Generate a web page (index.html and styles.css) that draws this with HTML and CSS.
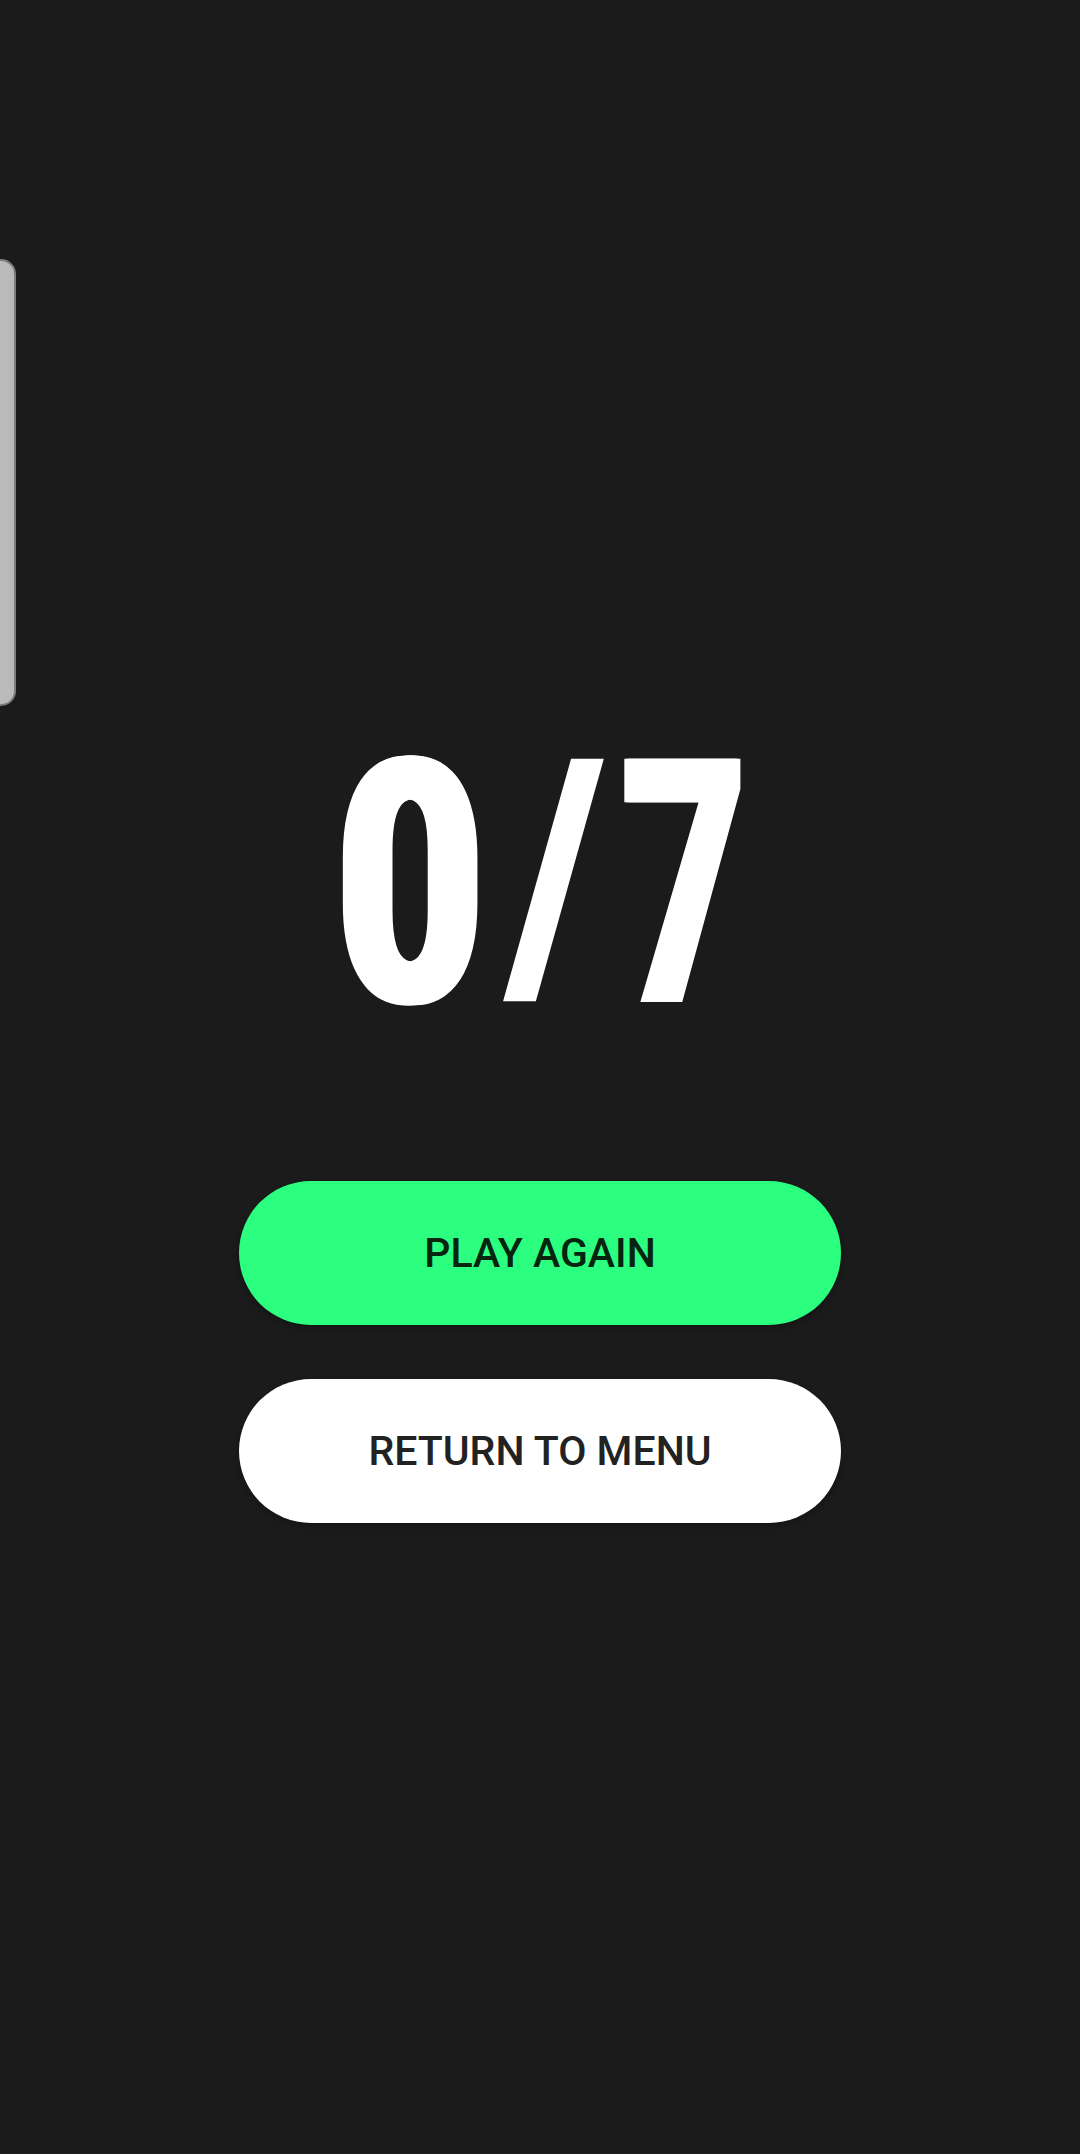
FILE: index.html
```html
<!DOCTYPE html>
<html lang="en">
<head>
<meta charset="utf-8">
<title>Result</title>
<link rel="stylesheet" href="styles.css">
</head>
<body>
<div class="drawer-handle"></div>
<main class="result">
  <div class="score">
    <span class="cell cell-got"><span class="glyph glyph-got">0</span></span>
    <span class="cell cell-sep"><span class="glyph glyph-sep">/</span></span>
    <span class="cell cell-total"><span class="glyph glyph-total">7</span></span>
  </div>
  <div class="actions">
    <button class="btn btn-primary">PLAY AGAIN</button>
    <button class="btn btn-secondary">RETURN TO MENU</button>
  </div>
</main>
</body>
</html>
```
FILE: styles.css
```css
html, body {
  margin: 0;
  padding: 0;
}
body {
  background: #1b1b1b;
  width: 1080px;
  height: 2154px;
  overflow: hidden;
  position: relative;
  font-family: Roboto, "Liberation Sans", sans-serif;
}
.drawer-handle {
  position: absolute;
  left: -20px;
  top: 259px;
  width: 32px;
  height: 443px;
  background: #bababa;
  border: 2px solid #7d7d7d;
  border-radius: 15px;
}
.result {
  display: flex;
  flex-direction: column;
  align-items: center;
  padding-top: 714px;
}
.score {
  height: 342px;
  display: flex;
  align-items: baseline;
  justify-content: center;
  padding-left: 6px;
  font-family: Roboto, sans-serif;
  font-weight: 900;
  font-size: 342px;
  line-height: 342px;
  color: #ffffff;
}
.cell {
  display: flex;
  justify-content: center;
  white-space: nowrap;
}
.cell-got {
  width: 133px;
}
.cell-sep {
  width: 101px;
  margin-left: 29px;
  font-size: 314px;
}
.cell-total {
  width: 116px;
  margin-left: 19px;
}
.glyph {
  display: inline-block;
  transform-origin: center;
}
.glyph-got {
  transform: scaleX(0.75);
  text-shadow: 5px 0 0 #ffffff, -5px 0 0 #ffffff, 2.5px 0 0 #ffffff, -2.5px 0 0 #ffffff;
}
.glyph-sep {
  transform: translateY(-20px) scaleX(0.89);
}
.glyph-total {
  transform: scaleX(0.64);
  text-shadow: 3px 0 0 #ffffff, -3px 0 0 #ffffff;
}
.actions {
  display: flex;
  flex-direction: column;
  gap: 54px;
  margin-top: 125px;
}
.btn {
  width: 602px;
  height: 144px;
  border: none;
  border-radius: 72px;
  font-family: Roboto, sans-serif;
  font-weight: 500;
  font-size: 41px;
  box-shadow: 0 3px 6px rgba(0, 0, 0, 0.25);
  padding: 0;
  cursor: pointer;
}
.btn-primary {
  background: #2cff80;
  color: #06250f;
}
.btn-secondary {
  background: #ffffff;
  color: #222222;
}
```
